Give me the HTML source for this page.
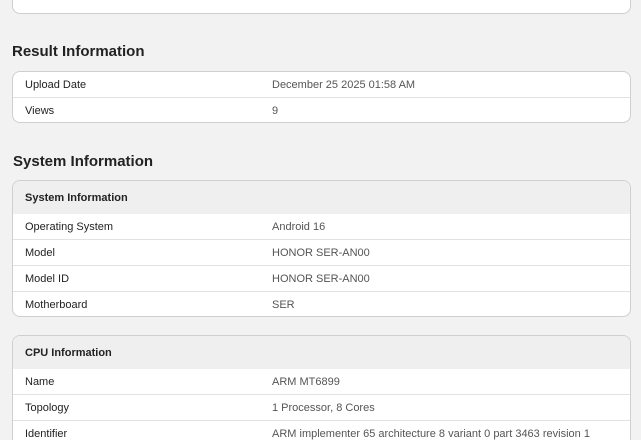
<!DOCTYPE html>
<html><head><style>
html,body{margin:0;width:641px;height:440px;overflow:hidden}
body{background:#f2f2f2;font-family:"Liberation Sans",Arial,sans-serif;color:#222;position:relative}
.card{position:absolute;left:12px;width:617px;background:#fff;border:1px solid #cfcfcf;border-radius:8px;overflow:hidden}
.row{height:25px;border-top:1px solid #e2e2e2;position:relative;font-size:11px;line-height:27px}
.row:first-child{border-top:none}
.row .k{position:absolute;left:12px}
.row .v{position:absolute;left:259px;color:#555}
.hd{height:33px;background:#efefef;font-size:11px;font-weight:bold;line-height:34px;padding-left:12px}
h2{position:absolute;left:12px;margin:0;font-size:15px;font-weight:bold;color:#222}
</style></head><body>
<div class="card" style="top:-10px;height:22px"></div>
<h2 style="top:43px">Result Information</h2>
<div class="card" style="top:71px">
<div class="row"><span class="k">Upload Date</span><span class="v">December 25 2025 01:58 AM</span></div>
<div class="row" style="height:24px"><span class="k">Views</span><span class="v">9</span></div>
</div>
<h2 style="top:153px;left:13px">System Information</h2>
<div class="card" style="top:180px">
<div class="hd">System Information</div>
<div class="row" style="border-top:none"><span class="k">Operating System</span><span class="v">Android 16</span></div>
<div class="row"><span class="k">Model</span><span class="v">HONOR SER-AN00</span></div>
<div class="row"><span class="k">Model ID</span><span class="v">HONOR SER-AN00</span></div>
<div class="row" style="height:24px"><span class="k">Motherboard</span><span class="v">SER</span></div>
</div>
<div class="card" style="top:335px">
<div class="hd">CPU Information</div>
<div class="row" style="border-top:none"><span class="k">Name</span><span class="v">ARM MT6899</span></div>
<div class="row"><span class="k">Topology</span><span class="v">1 Processor, 8 Cores</span></div>
<div class="row"><span class="k">Identifier</span><span class="v">ARM implementer 65 architecture 8 variant 0 part 3463 revision 1</span></div>
<div class="row"><span class="k"></span></div>
</div>
</body></html>
